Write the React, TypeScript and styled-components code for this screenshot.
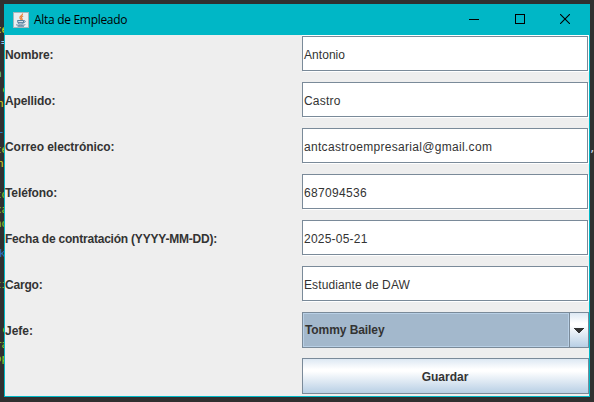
import React from "react";
import styled, { createGlobalStyle } from "styled-components";

const GlobalStyle = createGlobalStyle`
  * { box-sizing: border-box; }
  html, body { margin: 0; background: #303030; overflow: hidden; }
`;

const Desktop = styled.div`
  position: relative;
  width: 594px;
  height: 402px;
  padding: 4px;
  background: #303030;
  overflow: hidden;
`;

const CodeFragment = styled.span<{ $x: number; $y: number; $color: string }>`
  position: absolute;
  top: ${(p) => p.$y - 8}px;
  left: ${(p) => p.$x}px;
  font: 11px/16px "DejaVu Sans Mono", monospace;
  color: ${(p) => p.$color};
  white-space: pre;
`;

const Window = styled.main`
  position: relative;
  width: 586px;
  height: 393px;
  display: flex;
  flex-direction: column;
  border: 1px solid #00b7c6;
  border-top: 0;
  background: #eeeeee;
  font-family: "Liberation Sans", Arial, sans-serif;
  font-size: 12px;
  color: #333333;
`;

const TitleBar = styled.header`
  flex: none;
  height: 31px;
  display: flex;
  align-items: center;
  padding: 0 1px 0 8px;
  background: #00b7c6;
  color: #000;
`;

const Title = styled.h1`
  flex: 1;
  margin: 0 0 0 5px;
  font: 400 12px/16px "Open Sans", sans-serif;
  letter-spacing: -0.3px;
`;

const WindowButton = styled.button`
  width: 45.5px;
  height: 31px;
  padding: 0 0 1px;
  border: 0;
  background: none;
  display: grid;
  place-items: center;
  color: #000;
`;

const Form = styled.form`
  display: grid;
  grid-template-columns: 297px 287px;
  grid-auto-rows: 36px;
  row-gap: 10px;
  padding-top: 1px;
`;

const Label = styled.label<{ $spacing?: number }>`
  align-self: center;
  font-weight: 700;
  line-height: 16px;
  padding-top: 2px;
  letter-spacing: ${(p) => p.$spacing ?? 0}px;
  white-space: nowrap;
`;

const TextField = styled.div<{ $spacing?: number; $first?: boolean }>`
  display: flex;
  align-items: center;
  width: 286px;
  height: 35px;
  padding: 2px 1px 0;
  border: 1px solid #7a8a99;
  background: #fff;
  box-shadow: 1px 1px 0 #fff${(p) => (p.$first ? ", 0 -1px 0 #fff, 1px -1px 0 #fff" : "")};
  letter-spacing: ${(p) => p.$spacing ?? 0}px;
`;

const Combo = styled.div`
  display: flex;
  border: 1px solid #7a8a99;
  background: #a3b8cc;
  font-weight: 700;
`;

const ComboValue = styled.div`
  flex: 1;
  display: flex;
  align-items: center;
  padding-left: 1px;
  border: 1px solid #b8cfe5;
  letter-spacing: -0.08px;
`;

const ComboArrow = styled.div`
  width: 19px;
  display: grid;
  place-items: center;
  border-left: 1px solid #7a8a99;
  background: linear-gradient(#dde8f3 0%, #fff 30%, #fff 36%, #b8cfe5 100%);
`;

const SaveButton = styled.button`
  grid-column: 2;
  padding: 2px 1px 0 0;
  border: 1px solid #7a8a99;
  background: linear-gradient(#dde8f3 0%, #fff 30%, #fff 36%, #b8cfe5 100%);
  font: 700 12px/16px "Liberation Sans", Arial, sans-serif;
  color: #333;
`;

const fragments = [
  { text: "ce", x: -5, y: 30, color: "#d9e022" },
  { text: "=", x: 1, y: 43, color: "#8fc4e8" },
  { text: "n", x: -5, y: 74, color: "#62dfc0" },
  { text: "c", x: 2, y: 90, color: "#9bd02a" },
  { text: "n", x: -3, y: 104, color: "#d9d022" },
  { text: "-", x: -2, y: 132, color: "#2684cf" },
  { text: "te", x: -5, y: 150, color: "#b0d02a" },
  { text: "n", x: -3, y: 164, color: "#d9d022" },
  { text: "to", x: -5, y: 195, color: "#8bd32a" },
  { text: "ca", x: -5, y: 210, color: "#8bd32a" },
  { text: "no", x: -5, y: 224, color: "#8bd32a" },
  { text: "k", x: -1, y: 254, color: "#2672bf" },
  { text: "ti", x: -5, y: 285, color: "#8bc32a" },
  { text: "c", x: 2, y: 330, color: "#8bd32a" },
  { text: "ra", x: -5, y: 345, color: "#8bd32a" },
  { text: "op", x: -5, y: 359, color: "#8bd32a" },
];

const fields = [
  { label: "Nombre:", value: "Antonio", ls: -0.12, vs: 0.05 },
  { label: "Apellido:", value: "Castro", ls: -0.1, vs: 0.2 },
  { label: "Correo electrónico:", value: "antcastroempresarial@gmail.com", ls: -0.06, vs: 0.31 },
  { label: "Teléfono:", value: "687094536", ls: -0.1, vs: 0.33 },
  { label: "Fecha de contratación (YYYY-MM-DD):", value: "2025-05-21", ls: -0.21, vs: 0.22 },
  { label: "Cargo:", value: "Estudiante de DAW", ls: -0.2, vs: 0.1 },
];

const JavaIcon = () => (
  <svg width="16" height="16" viewBox="0 0 16 16">
    <rect x=".5" y=".5" width="15" height="15" fill="#e9edf0" stroke="#a9b5bb" />
    <path d="M9.5 1.5c.6 2-3.6 2.6-2.5 4.6.4.7 1 1 .9 1.8M10.2 4c-2 .8-2.2 1.7-1.2 2.6.5.5.3 1-.3 1.5" fill="none" stroke="#e8833a" strokeWidth="1.2" />
    <path d="M4.5 8.5h6v1.8c0 1.2-1 1.7-3 1.7s-2.6-.6-2.6-1.7zM10.5 8.7c2.5-.5 2.3 1.8-.4 2.2M3 12.6c1 .9 8 .9 9.3 0M4.5 14.2h6.5" fill="none" stroke="#567f9e" />
    <path d="M5 10.4h5" stroke="#567f9e" />
  </svg>
);

export default function App() {
  return (
    <Desktop>
      <GlobalStyle />
      {fragments.map((f) => (
        <CodeFragment key={f.y} $x={f.x} $y={f.y} $color={f.color}>{f.text}</CodeFragment>
      ))}
      <CodeFragment $x={589} $y={149} $color="#c9dcf0">,</CodeFragment>
      <Window>
        <TitleBar>
          <JavaIcon />
          <Title>Alta de Empleado</Title>
          <WindowButton type="button" aria-label="Minimizar">
            <svg width="10" height="10" shapeRendering="crispEdges"><path d="M0 5.5h10" stroke="currentColor" /></svg>
          </WindowButton>
          <WindowButton type="button" aria-label="Maximizar">
            <svg width="10" height="10" shapeRendering="crispEdges"><rect x=".5" y=".5" width="9" height="9" fill="none" stroke="currentColor" /></svg>
          </WindowButton>
          <WindowButton type="button" aria-label="Cerrar">
            <svg width="10" height="10"><path d="M0 0l10 10M10 0L0 10" stroke="currentColor" strokeWidth="1.1" /></svg>
          </WindowButton>
        </TitleBar>
        <Form>
          {fields.map((f, i) => (
            <React.Fragment key={f.label}>
              <Label $spacing={f.ls}>{f.label}</Label>
              <TextField $spacing={f.vs} $first={i === 0}>{f.value}</TextField>
            </React.Fragment>
          ))}
          <Label>Jefe:</Label>
          <Combo>
            <ComboValue>Tommy Bailey</ComboValue>
            <ComboArrow>
              <svg width="10" height="5" shapeRendering="crispEdges"><path d="M0 0h10v1h-1v1h-1v1h-1v1h-1v1h-2v-1h-1v-1h-1v-1h-1v-1h-1z" fill="#333" /></svg>
            </ComboArrow>
          </Combo>
          <SaveButton type="button">Guardar</SaveButton>
        </Form>
      </Window>
    </Desktop>
  );
}
